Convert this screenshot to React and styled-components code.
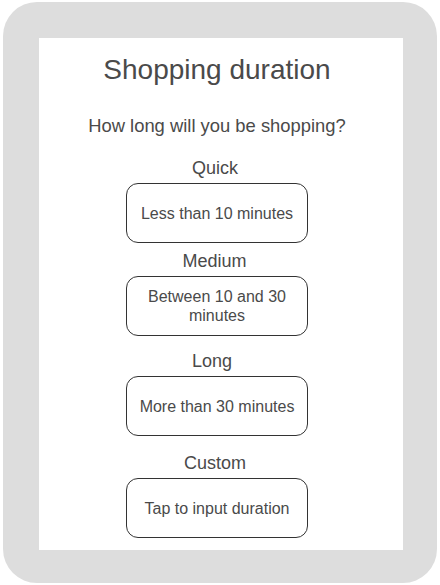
import React from "react";
import styled, { createGlobalStyle } from "styled-components";

const Global = createGlobalStyle`
  html, body { margin: 0; padding: 0; background: #ffffff; }
  body { font-family: "Liberation Sans", Arial, sans-serif; }
`;

const Frame = styled.div`
  box-sizing: border-box;
  margin: 2px 0 0 3px;
  width: 434px;
  height: 581px;
  background: #dddddd;
  border-radius: 34px;
  padding: 36px 34px 33px 36px;
`;

const Screen = styled.div`
  box-sizing: border-box;
  height: 100%;
  background: #ffffff;
  display: flex;
  flex-direction: column;
  align-items: center;
  padding: 16px 8px 0 0;
  color: #4a4a4a;
`;

const Title = styled.h1`
  margin: 0;
  font-weight: 400;
  font-size: 28px;
  line-height: 32px;
  color: #4a4a4a;
`;

const Question = styled.p`
  margin: 29px 0 0;
  font-size: 18.4px;
  line-height: 22px;
`;

const Group = styled.div`
  display: flex;
  flex-direction: column;
  align-items: center;
  gap: 4px;
  margin-top: ${(p) => p.$top}px;
`;

const Label = styled.div`
  font-size: 18px;
  line-height: 22px;
  padding-right: ${(p) => p.$shift}px;
`;

const Option = styled.button`
  box-sizing: border-box;
  width: 182px;
  height: 60px;
  padding: 0 12px;
  border: 1px solid #333333;
  border-radius: 12px;
  background: #ffffff;
  font-family: "Liberation Sans", Arial, sans-serif;
  font-size: 16px;
  line-height: 19px;
  color: #4a4a4a;
  text-align: center;
  cursor: pointer;
`;

const options = [
  { label: "Quick", text: "Less than 10 minutes", top: 20, shift: 4 },
  { label: "Medium", text: "Between 10 and 30 minutes", top: 7, shift: 5 },
  { label: "Long", text: "More than 30 minutes", top: 14, shift: 10 },
  { label: "Custom", text: "Tap to input duration", top: 16, shift: 4 },
];

export default function App() {
  return (
    <>
      <Global />
      <Frame>
        <Screen>
          <Title>Shopping duration</Title>
          <Question>How long will you be shopping?</Question>
          {options.map((o) => (
            <Group key={o.label} $top={o.top}>
              <Label $shift={o.shift}>{o.label}</Label>
              <Option>{o.text}</Option>
            </Group>
          ))}
        </Screen>
      </Frame>
    </>
  );
}
